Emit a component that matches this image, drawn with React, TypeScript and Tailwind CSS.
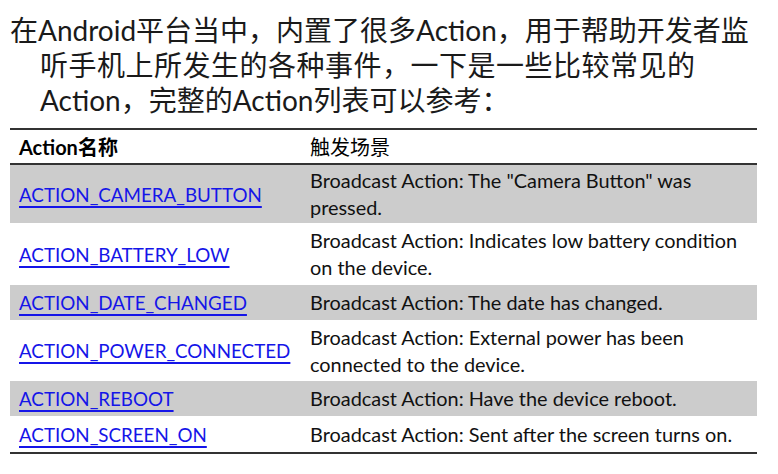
import React from "react";

const rows: { name: string; desc: string[]; h: string; gray: boolean }[] = [
  { name: "ACTION_CAMERA_BUTTON", desc: ['Broadcast Action: The "Camera Button" was', "pressed."], h: "h-[58px]", gray: true },
  { name: "ACTION_BATTERY_LOW", desc: ["Broadcast Action: Indicates low battery condition", "on the device."], h: "h-[62px]", gray: false },
  { name: "ACTION_DATE_CHANGED", desc: ["Broadcast Action: The date has changed."], h: "h-[35px]", gray: true },
  { name: "ACTION_POWER_CONNECTED", desc: ["Broadcast Action: External power has been", "connected to the device."], h: "h-[61px]", gray: false },
  { name: "ACTION_REBOOT", desc: ["Broadcast Action: Have the device reboot."], h: "h-[35px]", gray: true },
  { name: "ACTION_SCREEN_ON", desc: ["Broadcast Action: Sent after the screen turns on."], h: "h-[36px]", gray: false },
];

export default function App() {
  return (
    <div
      className="w-[778px] h-[474px] bg-white overflow-hidden"
      style={{ fontFamily: 'Lato, "Noto Sans CJK SC", sans-serif' }}
    >
      <div className="pt-[13px] text-[28px] leading-[35px] text-[#1a1a1a] whitespace-nowrap">
        <div className="pl-[10px]">在Android平台当中，内置了很多Action，用于帮助开发者监</div>
        <div className="pl-[40px] tracking-[0.5px]">听手机上所发生的各种事件，一下是一些比较常见的</div>
        <div className="pl-[40px]">Action，完整的Action列表可以参考：</div>
      </div>
      <div className="mt-[10px] ml-[10px] w-[747px] border-t-2 border-b-2 border-[#333]">
        <div className="flex h-[35px] items-center border-b-2 border-[#333] text-[20px] text-black">
          <div className="w-[291px] pl-[9px] font-bold">Action名称</div>
          <div className="pl-[9px] text-[20px]">触发场景</div>
        </div>
        {rows.map((r) => (
          <div
            key={r.name}
            className={`flex items-center ${r.h} ${r.gray ? "bg-[#cccccc]" : "bg-white"} leading-[27px]`}
          >
            <div className="w-[291px] pl-[9px] text-[18.8px]">
              <a href="#" className="text-[#1515e8] underline decoration-[1.5px] underline-offset-[4px]">
                {r.name}
              </a>
            </div>
            <div className="pl-[9px] text-[#111] text-[19.9px]">
              {r.desc.map((d, i) => (
                <div key={i} className="whitespace-nowrap">{d}</div>
              ))}
            </div>
          </div>
        ))}
      </div>
    </div>
  );
}
